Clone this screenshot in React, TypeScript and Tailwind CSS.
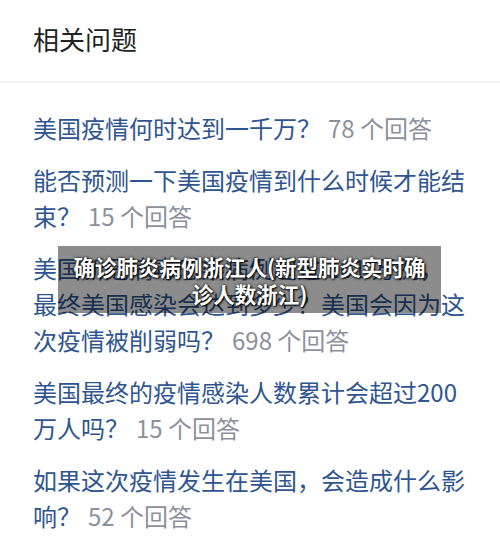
import React from "react";

const questions = [
  { q: "美国疫情何时达到一千万？", n: "78" },
  { q: "能否预测一下美国疫情到什么时候才能结束？", n: "15" },
  { q: "美国新冠病毒感染病例超过 101 万例，最终美国感染会达到多少？美国会因为这次疫情被削弱吗？", n: "698" },
  { q: "美国最终的疫情感染人数累计会超过200万人吗？", n: "15" },
  { q: "如果这次疫情发生在美国，会造成什么影响？", n: "52" },
];

export default function App() {
  return (
    <div
      className="relative w-[500px] h-[560px] overflow-hidden bg-white"
      style={{ fontFamily: '"Noto Sans CJK SC", "Noto Sans", sans-serif' }}
    >
      <div className="h-[81px] flex items-center px-[33px] pb-[3px]">
        <h2 className="text-[26px] leading-[36px] text-[#222] font-normal">相关问题</h2>
      </div>
      <div className="h-[2px] bg-[#f2f2f2]" />
      <div className="pl-[33px] pr-[33px] pt-[27px] flex flex-col gap-[16px]">
        {questions.map((item, i) => (
          <div key={i} className="text-[24px] leading-[36px] text-[#2f5590]">
            {item.q}
            <span className="text-[#8b919c] ml-[7px]">{item.n} 个回答</span>
          </div>
        ))}
      </div>
      <div className="absolute left-[58px] top-[246px] w-[383px] h-[67px] bg-black/45 flex items-center justify-center">
        <p
          className="w-[360px] text-white font-bold text-[21.5px] leading-[27px] text-center"
          style={{ textShadow: "0 0 3px #000, 1px 1px 2px #000" }}
        >
          确诊肺炎病例浙江人(新型肺炎实时确诊人数浙江)
        </p>
      </div>
    </div>
  );
}
